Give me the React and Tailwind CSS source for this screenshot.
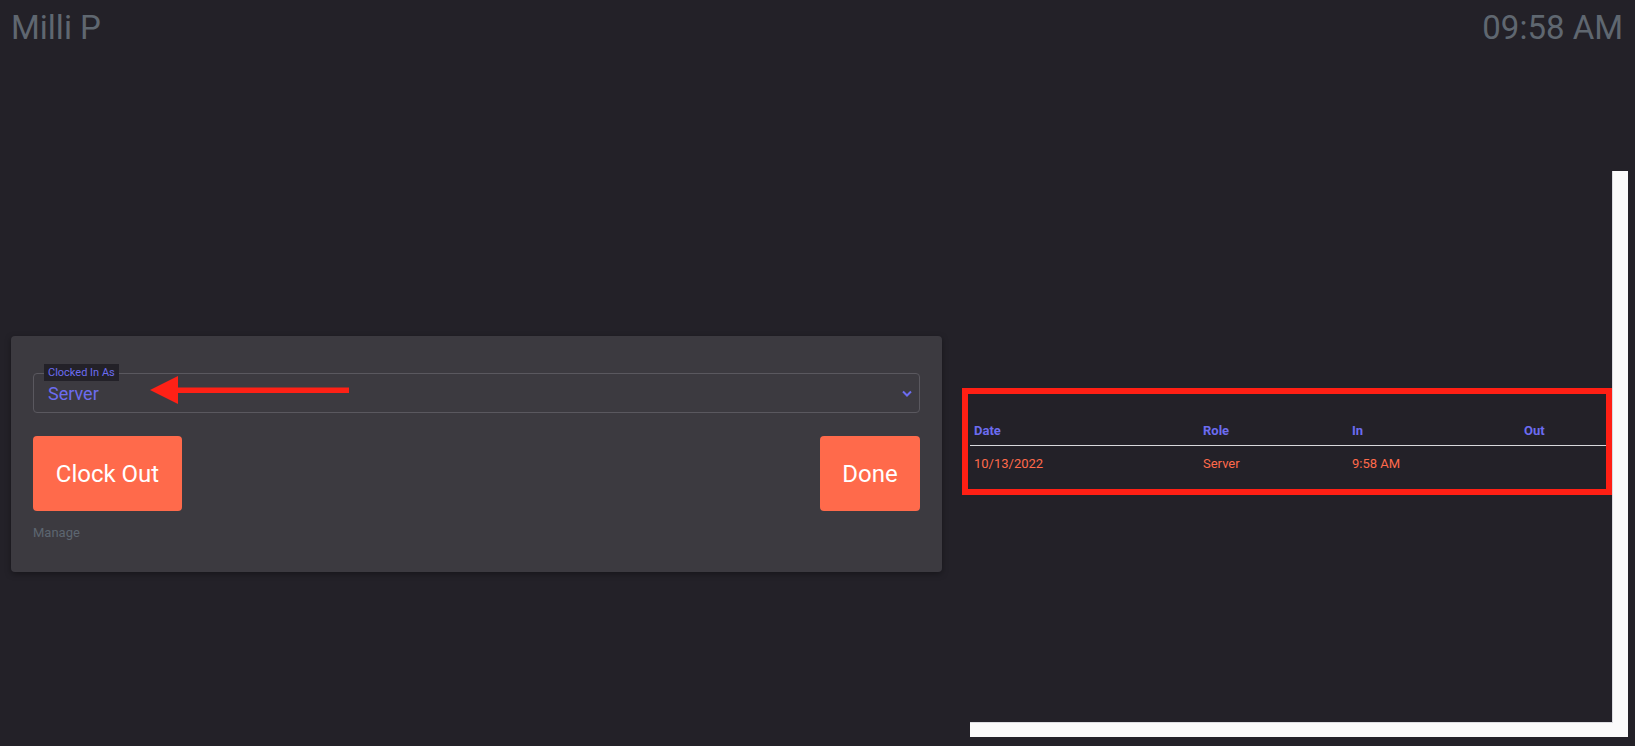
import { useState } from "react";

const shifts = [{ date: "10/13/2022", role: "Server", timeIn: "9:58 AM", timeOut: "" }];

export default function App() {
  const [role] = useState("Server");

  return (
    <div className="min-h-screen w-full bg-[#232128] font-['Roboto','Liberation_Sans',sans-serif]">
      {/* Top bar */}
      <header className="flex h-[162px] items-start justify-between pl-[11px] pr-[12px] pt-[11px] text-[33px] leading-none text-[#5f6770]">
        <div>Milli P</div>
        <div>09:58 AM</div>
      </header>

      <main className="flex h-[584px] items-center pl-[11px] pr-[7px]">
        {/* Clock card */}
        <div className="relative h-[236px] w-[931px] rounded-[4px] bg-[#3c3a40] px-[22px] pt-[37px] shadow-[0_2px_6px_rgba(0,0,0,0.35)]">
          <div className="relative flex h-[40px] items-center rounded-[4px] border border-[#5a585f] pl-[14px] pr-[7px]">
            <span className="absolute -top-[10px] left-[10px] bg-[#232128] px-[4px] text-[11px] leading-[17px] text-[#6c6cf0]">
              Clocked In As
            </span>
            <span className="flex-1 pt-[2px] text-[18px] leading-none text-[#6c6cf0]">{role}</span>
            <svg width="10" height="7" viewBox="0 0 10 7" className="mt-[1px]">
              <path d="M1 1.5 L5 5.5 L9 1.5" fill="none" stroke="#6c6cf0" strokeWidth="2" />
            </svg>
          </div>

          <div className="mt-[23px] flex justify-between">
            <button className="h-[75px] w-[149px] rounded-[4px] bg-[#ff6a4b] text-[24px] text-white">Clock Out</button>
            <button className="h-[75px] w-[100px] rounded-[4px] bg-[#ff6a4b] text-[24px] text-white">Done</button>
          </div>

          <div className="mt-[14px] text-[13px] leading-4 text-[#5d6670]">Manage</div>

          {/* annotation arrow */}
          <svg className="absolute left-[139px] top-[40px]" width="199" height="28" viewBox="0 0 199 28">
            <polygon points="0,14 28,0 28,28" fill="#fe2116" />
            <rect x="26" y="11.5" width="173" height="5.5" fill="#fe2116" />
          </svg>
        </div>

        {/* Shift history */}
        <div className="ml-[28px] h-[566px] w-[658px] bg-[#fafafa]">
          <div className="relative flex h-[552px] w-[643px] items-center border-b border-r border-[#dcdce0] bg-[#232128]">
            <table className="w-[637px] table-fixed text-[13px] leading-4">
              <thead>
                <tr className="border-b border-[#d8d8dc]">
                  <th className="w-[229px] pb-[6px] pl-[4px] pt-[8px] text-left font-bold text-[#6c6cf0]">Date</th>
                  <th className="w-[149px] pb-[6px] pl-[4px] pt-[8px] text-left font-bold text-[#6c6cf0]">Role</th>
                  <th className="w-[172px] pb-[6px] pl-[4px] pt-[8px] text-left font-bold text-[#6c6cf0]">In</th>
                  <th className="w-[87px] pb-[6px] pl-[4px] pt-[8px] text-left font-bold text-[#6c6cf0]">Out</th>
                </tr>
              </thead>
              <tbody>
                {shifts.map((s) => (
                  <tr key={s.date + s.timeIn} className="text-[#ff6a4b]">
                    <td className="pb-[6px] pl-[4px] pt-[10px]">{s.date}</td>
                    <td className="pb-[6px] pl-[4px] pt-[10px]">{s.role}</td>
                    <td className="pb-[6px] pl-[4px] pt-[10px]">{s.timeIn}</td>
                    <td className="pb-[6px] pl-[4px] pt-[10px]">{s.timeOut}</td>
                  </tr>
                ))}
              </tbody>
            </table>

            {/* annotation box */}
            <div className="absolute left-[-8px] top-[217px] h-[107px] w-[650px] border-[6px] border-[#ff1f14]" />
          </div>
        </div>
      </main>
    </div>
  );
}
